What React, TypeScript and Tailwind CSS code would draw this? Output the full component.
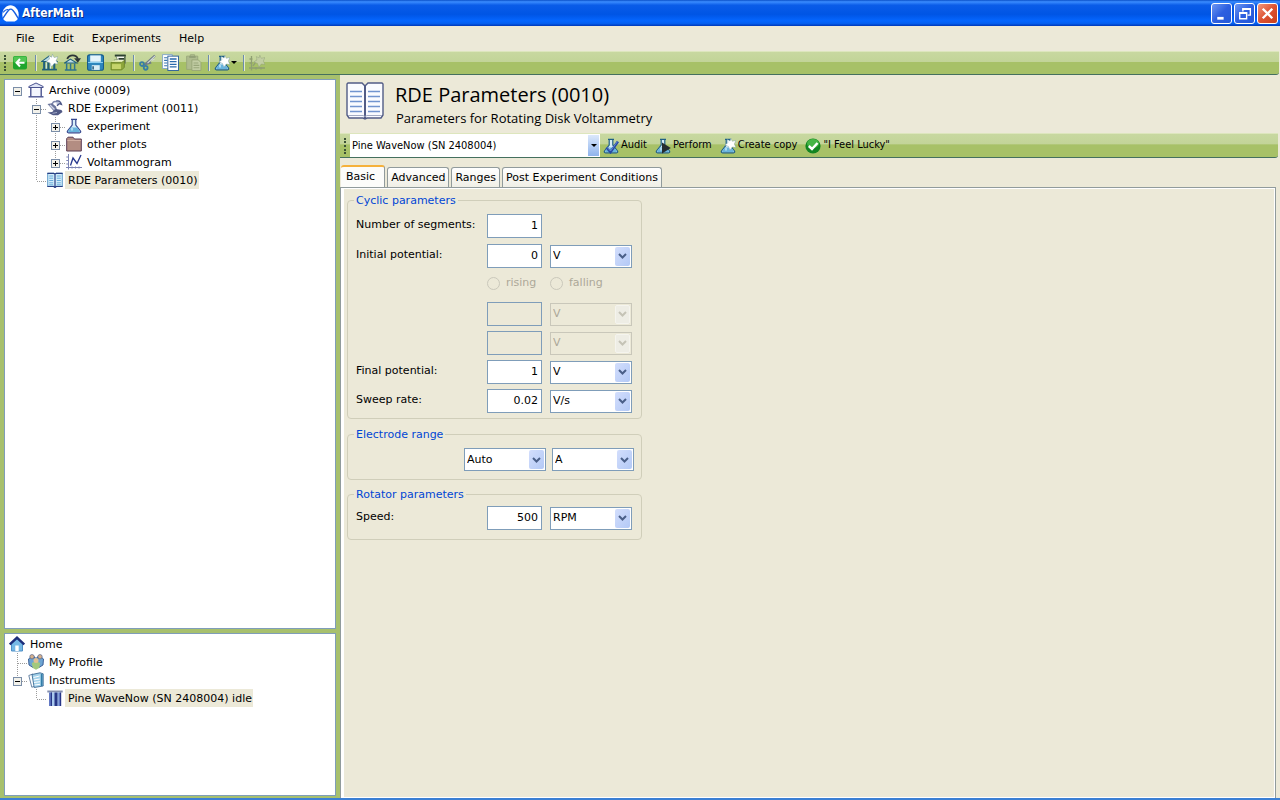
import { ReactNode, useState } from "react";
import clsx from "clsx";

type IconProps = { className?: string }

const ui = "font-['DejaVu_Sans',sans-serif]"
const narrow = "font-['DejaVu_Sans_Condensed','DejaVu_Sans',sans-serif]"
const heading = "font-['Open_Sans','Noto_Sans',sans-serif]"
const bar = "border-t border-t-[#dde6bd] border-b border-b-[#45705e] bg-[linear-gradient(to_bottom,#c8d8a0_0%,#c2d498_45%,#a7c167_46%,#a7c167_100%)]"

const Svg = ({ className = "size-4", children }: { className?: string, children: ReactNode }) => (
    <svg viewBox="0 0 16 16" className={clsx("shrink-0", className)} fill="none" aria-hidden="true">{children}</svg>
)

const LogoIcon = () => (
    <Svg className="size-[17px]">
        <path d="M8 .3C4 .3.4 4 .3 9c0 2 .6 3.700 1.500 5L4 15.500h8l2.200-1.500c.9-1.300 1.500-3 1.500-5C15.600 4 12 .3 8 .3Z" fill="#fff" />
        <path d="M.8 12.500C2.500 10 4 7.500 6.200 5 7.500 3.500 9 3.500 10.200 5c2.200 2.500 3.500 5 5 7.500" stroke="#1a5fe0" strokeWidth="1.300" />
        <path d="M6 4.500C4.500 3.500 3 4.500 1 7" stroke="#1a5fe0" strokeWidth="1" />
    </Svg>
)

const Star = ({ muted = false }: { muted?: boolean }) => (
    <path
        d="M10.800.2 12.300 3.300 16 2.500 14.300 6 16 9.500l-3.700-.5-2.400 3.200-1.400-3.800L4.800 7l3.200-2.200L7.300 1.500l2.800 1.500Z"
        fill={muted ? "#c2cea3" : "#fff"}
        stroke={muted ? "#8c9b74" : "#6f949c"}
        strokeWidth=".4"
    />
)

const BackIcon = () => (
    <Svg>
        <rect x="1" y="1" width="14" height="13.500" rx="2" fill="#1fa52c" />
        <rect x="1.500" y="1.500" width="13" height="6" rx="1.500" fill="#52c653" />
        <path d="M8 4 4.500 7.700 8 11.500M4.800 7.700H12.500" stroke="#fff" strokeWidth="2" />
    </Svg>
)

const HouseBase = () => (
    <>
        <path d="M.8 7 7.500 2 15 7Z" fill="#bcdde6" stroke="#20607c" />
        <path d="M3 7.500V14M7 7.500V14M12.500 7.500V14" stroke="#20607c" strokeWidth="2" />
        <path d="M5 8v6M9 8v6" stroke="#d5eaf0" />
        <path d="M1 14.700h14" stroke="#20607c" strokeWidth="1.600" />
    </>
)

const ArchiveNewIcon = () => <Svg className="size-[17px]"><HouseBase /><Star /></Svg>

const ArchiveOpenIcon = () => (
    <Svg className="size-[17px]">
        <path d="M.5 8.500 6 4.800l6 3.700Z" fill="#bcdde6" stroke="#20607c" />
        <path d="M2.500 9v5.500M6.200 9v5.500M10 9v5.500M.8 15h11" stroke="#2e7390" strokeWidth="1.400" />
        <path d="M3 4.500C5 .2 11.500.2 13 4.500" stroke="#2b3437" strokeWidth="1.700" />
        <path d="M9.500 4H16l-3 4.200Z" fill="#2b3437" />
    </Svg>
)

const SaveIcon = () => (
    <Svg className="size-[17px]">
        <rect x=".5" y=".8" width="15" height="14.500" rx="2" fill="#2e86bd" stroke="#175c8c" />
        <path d="M3 1.300h10v6H3z" fill="#e6f5fc" />
        <path d="M1 8h14" stroke="#8fd0f0" />
        <path d="M4.500 10.500h7.500v4.500H4.500z" fill="#d9edf5" />
        <path d="M5 11.500h1.500v3H5z" fill="#2e5f80" />
    </Svg>
)

const PrintIcon = () => (
    <Svg className="size-[17px]">
        <path d="M5 .8h9.500v8L12 11H4V5.500h3z" fill="#f4f6ee" stroke="#5a7049" strokeWidth=".6" />
        <path d="M4.500 1.500h10.300M8 4.500h5.500" stroke="#2c4030" strokeWidth="1.600" />
        <path d="M13.800 2v7" stroke="#5d7352" strokeWidth="1.300" />
        <path d="M1 8 3 6h10l-2 2z" fill="#dbe7a4" />
        <path d="M1 8h10l2.500-2v6.500L11 15H1z" fill="#8ea63b" stroke="#637c20" strokeWidth=".7" />
        <path d="M1.800 9.500h8.500v4.700H1.800z" fill="#c5d46b" />
    </Svg>
)

const CutIcon = () => (
    <Svg className="size-[17px]">
        <path d="M5 10.500 15 1.500M6.500 9.500l5-1.500" stroke="#6f7c88" strokeWidth="2" />
        <path d="M8 8.500 15 2M12 6l2.500-1" stroke="#d5dcda" strokeWidth="1" />
        <circle cx="2.800" cy="9.500" r="1.800" stroke="#397fa3" strokeWidth="1.700" />
        <circle cx="6.300" cy="13" r="1.800" stroke="#397fa3" strokeWidth="1.700" />
    </Svg>
)

const CopyIcon = () => (
    <Svg className="size-[17px]">
        <rect x=".6" y=".6" width="9" height="13" fill="#fff" stroke="#7fa3c8" strokeWidth=".8" />
        <path d="M2 3.500h3M2 6h3M2 8.500h3M2 11h3" stroke="#3474b1" />
        <rect x="5.500" y="2" width="10" height="13.500" fill="#fff" stroke="#2d619b" strokeWidth=".9" />
        <path d="M7.300 4.700h6.400M7.300 7.200h6.400M7.300 9.700h6.400M7.300 12.200h6.400" stroke="#286aac" strokeWidth="1.200" />
    </Svg>
)

const PasteIcon = () => (
    <Svg className="size-[17px]">
        <path d="M1.500 2H5V.7h4V2h3v12.500H1.500z" fill="#aebb8e" stroke="#98a67a" strokeWidth=".8" />
        <path d="M4 2.800h6" stroke="#8b9970" strokeWidth="1.400" />
        <path d="M6.500 5.500h6l2.500 2.500v7.500H6.500z" fill="#c2cda4" stroke="#94a375" strokeWidth=".8" />
        <path d="M8 8.500h4.500M8 10.700h5.500M8 12.900h5.500" stroke="#98a67a" />
    </Svg>
)

const FlaskShape = ({ dark = false }: { dark?: boolean }) => (
    <>
        <path d="M5 1.300h6M6.200 2v5L1.500 13c-.6 1 0 1.800 1 1.800h11c1 0 1.600-.8 1-1.800L9.800 7V2" fill="#d7eef8" stroke={dark ? "#1f5f86" : "#34478f"} strokeWidth="1.200" />
        <path d="M4.700 9.500h6.600l2.500 3.800c.2.500 0 .8-.5.800H2.700c-.5 0-.7-.3-.5-.8z" fill="#68b4dd" />
        <path d="M6 10v2.500" stroke="#d9f3ff" strokeWidth="1.200" />
    </>
)

const FlaskIcon = ({ className }: IconProps) => <Svg className={className}><FlaskShape /></Svg>
const FlaskStarIcon = () => <Svg><FlaskShape dark /><Star /></Svg>
const FlaskPlayIcon = () => <Svg><FlaskShape dark /><path d="M7 4.500 15.800 10 7 15.500Z" fill="#242c30" /></Svg>

const FlaskCheckIcon = () => (
    <Svg>
        <FlaskShape dark />
        <path d="M3.500 9.500 7.500 14 15 3.500" stroke="#2549a5" strokeWidth="2.600" />
        <path d="M4 9.300 7.500 13 14.500 3.500" stroke="#7ea4e2" strokeWidth=".7" />
    </Svg>
)

const PlotMutedIcon = () => (
    <Svg>
        <path d="M2.500 1v14.500M0 13h16M.5 4h3M.5 8h3M7 12v2.500M12 12v2.500M4 11l4-6" stroke="#8f9f72" strokeWidth="1.300" />
        <Star muted />
    </Svg>
)

const OkIcon = () => (
    <Svg>
        <circle cx="8" cy="8" r="7.600" fill="#128521" />
        <ellipse cx="8" cy="5.500" rx="6" ry="4.500" fill="#45b545" />
        <path d="M3.800 8 7 11 12.500 5" stroke="#fff" strokeWidth="2.400" />
    </Svg>
)

const TempleIcon = () => (
    <Svg>
        <path d="M.8 5.500V4.500L8 1l7.200 3.500v1Z" fill="#dfe4f5" stroke="#4a5390" />
        <path d="M2.800 6v8.500M13.200 6v8.500" stroke="#4a5390" strokeWidth="1.400" />
        <path d="M4 6.500h8v7.500H4z" fill="#f3f5fc" />
        <path d="M.5 14.800h15" stroke="#4a5390" strokeWidth="1.400" />
    </Svg>
)

const MotorIcon = () => (
    <Svg>
        <path d="M5 6C5 2 7 1 9.500 1.800" stroke="#7a84aa" strokeWidth="1.400" />
        <path d="M9 1.200C11 .2 13.500 1 14.500 4.500l-2.200-.8-2.300 2" stroke="#4b5687" strokeWidth="1.300" fill="#b9c1d8" />
        <path d="M.5 4 5 3.200l4 3.300 1.500 5-2 2L5 9z" fill="#6c769c" />
        <path d="m3 5 4.500 4.500" stroke="#d0d6e8" strokeWidth="1.400" />
        <path d="M.5 12.500 5 12l4-3 5.500 1 1 2-4.500 3.300H6z" fill="#515a85" />
        <path d="m5.500 13.300 4.500-.8" stroke="#a2abc9" />
    </Svg>
)

const FolderIcon = () => (
    <Svg>
        <path d="M.7 2.500 2 1.200h5L8.500 3h6.800v12H.7z" fill="#b38d82" stroke="#5a3c54" />
        <path d="M1.300 4.500h13.500" stroke="#d1aea1" />
    </Svg>
)

const ChartIcon = () => (
    <Svg>
        <path d="M2.500 0v15.500M0 13.500h16M.3 3H3M.3 6.500H3M.3 10H3M6 12.500v2M9.500 12.500v2M13 12.500v2" stroke="#7c84b4" />
        <path d="M4.500 11.500 7 4l4 5.500L15 1" stroke="#26378e" strokeWidth="1.300" />
    </Svg>
)

const BookIcon = ({ className }: IconProps) => (
    <Svg className={className}>
        <path d="M.7 1.300h6L8 2.300l1.300-1h6v13H9.300l-1.300 1-1.300-1H.7z" fill="#d3edfa" stroke="#5d9ac8" />
        <path d="M.3 1.300h6.400L8 2.300l1.300-1h6.400M.3 14.500h6.400l1.300 1 1.300-1h6.400M8 2v13" stroke="#283f84" strokeWidth="1.200" />
        <path d="M2.200 4h4M2.200 6.200h4M2.200 8.500h4M2.200 10.800h4M2.200 12.800h4M9.800 4h4M9.800 6.200h4M9.800 8.500h4M9.800 10.800h4M9.800 12.800h4" stroke="#6aaddb" />
    </Svg>
)

const LargeBookIcon = () => (
    <svg viewBox="0 0 38 38" className="size-[38px] shrink-0" fill="none" aria-hidden="true">
        <path d="M2 1h14l3 3 3-3h14l1 1v31l-2 3H21l-2 1-2-1H3l-2-3V2z" fill="#fafbff" stroke="#525c86" strokeWidth="1.400" />
        <path d="M19 4v33" stroke="#525c86" strokeWidth="2" />
        <path d="M2 33.500h15l2 1 2-1h15" stroke="#a4abc3" strokeWidth="1" />
        <path d="M4 9.500h12M4 14.500h12M4 19.500h12M4 24.500h12M4 29.500h12M22 9.500h12M22 14.500h12M22 19.500h12M22 24.500h12M22 29.500h12" stroke="#7294cf" strokeWidth="1.700" />
    </svg>
)

const HomeIcon = () => (
    <Svg>
        <path d="M2.500 7.500 8 3l5.500 4.500v7.500h-11z" fill="#76b9e6" stroke="#4f8fc6" />
        <path d="M.8 8.500 8 1.700l7.200 6.800" stroke="#1c2d7b" strokeWidth="2.400" />
        <path d="M6.300 9.500h3.400V15H6.300z" fill="#fff" />
    </Svg>
)

const PeopleIcon = () => (
    <Svg>
        <path d="M.5 5 3 3h4l1 8-3 2.500L1 11zM15.500 5 13 3H9l-1 8 3 2.500 4-2.500z" fill="#6da4d3" stroke="#31558f" strokeWidth=".9" />
        <circle cx="4" cy="2.700" r="2.200" fill="#d7b18b" stroke="#435787" strokeWidth=".6" />
        <circle cx="12" cy="2.700" r="2.200" fill="#d7b18b" stroke="#435787" strokeWidth=".6" />
        <path d="M3.800 9 6 8h4l2.200 1-1 5L8 15.700 4.800 14z" fill="#a2c97d" />
        <circle cx="8" cy="6.500" r="2.500" fill="#e0bf92" />
    </Svg>
)

const SheetsIcon = () => (
    <Svg>
        <path d="m.8 3.500 4-1.500 3 12-4 1.200z" fill="#fff" stroke="#58789c" strokeWidth=".9" />
        <path d="M4 2.500 12 .8l3.200 1V14l-9 1.500z" fill="#a4d2ea" stroke="#3f6d96" strokeWidth=".9" />
        <path d="m5.500 5.500 6-1.500M5.800 8l6-1M6 10.500l6-.8M6.500 13l5.500-.7" stroke="#fff" />
        <path d="M13.700 2v12" stroke="#337da8" strokeWidth="1.700" />
    </Svg>
)

const PotentiostatIcon = () => (
    <Svg>
        <path d="M.3.500h15.400v2H.3z" fill="#848fae" />
        <path d="M2 2.500h12V16H2z" fill="#a9c9ee" />
        <path d="M2 2.500h3V16H2zM11.500 2.500h1.700V16h-1.700z" fill="#6379c4" />
        <path d="M3.800 2.500h1.200V16H3.800zM7.500 2.500h3V16h-3zM13 2.500h1.200V16H13z" fill="#273686" />
    </Svg>
)

const Grip = () => (
    <span className="flex w-[10px] shrink-0 justify-center" aria-hidden="true">
        <span className="h-4 w-0 border-l-2 border-dotted border-[#3b5136]" />
    </span>
)

const Separator = () => (
    <span className="flex w-[6px] shrink-0 justify-center" aria-hidden="true">
        <span className="h-4 w-[2px] border-l border-l-[#6d8cae] bg-[#e3ecc9]" />
    </span>
)

const Caret = () => <span className="border-x-[3px] border-t-[3px] border-x-transparent border-t-black" />

const ToolButton = ({ label, disabled, children }: { label: string, disabled?: boolean, children: ReactNode }) => (
    <button aria-label={label} disabled={disabled} className="flex h-5 min-w-[23px] shrink-0 items-center pb-px pl-[2px]">
        {children}
    </button>
)

const ActionButton = ({ label, children }: { label: string, children: ReactNode }) => (
    <button className={clsx("flex shrink-0 items-center gap-[2px] whitespace-nowrap", narrow)}>
        {children}
        {label}
    </button>
)

// Each tree row starts with 19px wide cells that hold the connector lines
type Cell = "blank" | "line" | "tee" | "elbow" | "plus" | "minus" | "plusEnd" | "minusRoot" | "minusEnd"

const TreeCell = ({ kind }: { kind: Cell }) => {
    const toggle = kind.startsWith("plus") || kind.startsWith("minus")
    const up = kind != "blank" && kind != "minusRoot"
    const down = kind == "line" || kind == "tee" || kind == "plus" || kind == "minus"
    const across = up && kind != "line"
    const art = (
        <svg viewBox="0 0 19 18" className="h-[18px] w-[19px] shrink-0" fill="none" shapeRendering="crispEdges" aria-hidden="true">
            {up && <path d="M9.500 0v9" stroke="#9b9b9b" strokeDasharray="1 1" />}
            {down && <path d="M9.500 10v8" stroke="#9b9b9b" strokeDasharray="1 1" />}
            {across && <path d="M10 10.500h9" stroke="#9b9b9b" strokeDasharray="1 1" />}
            {toggle && (
                <>
                    <rect x="5.500" y="6.500" width="8" height="8" fill="#f2f1ea" stroke="#7b8ea8" />
                    <path d="M7 10.500h5" stroke="#000" />
                    {kind.startsWith("plus") && <path d="M9.500 8v5" stroke="#000" />}
                </>
            )}
        </svg>
    )
    if (!toggle) return art
    return <button aria-label={kind.startsWith("plus") ? "Expand" : "Collapse"} className="shrink-0">{art}</button>
}

type Node = { label: string, cells: Cell[], icon: ReactNode, selected?: boolean }

const archive: Node[] = [
    { label: "Archive (0009)", cells: ["minusRoot"], icon: <TempleIcon /> },
    { label: "RDE Experiment (0011)", cells: ["blank", "minus"], icon: <MotorIcon /> },
    { label: "experiment", cells: ["blank", "line", "plus"], icon: <FlaskIcon /> },
    { label: "other plots", cells: ["blank", "line", "plus"], icon: <FolderIcon /> },
    { label: "Voltammogram", cells: ["blank", "line", "plusEnd"], icon: <ChartIcon /> },
    { label: "RDE Parameters (0010)", cells: ["blank", "elbow"], icon: <BookIcon />, selected: true },
]

const home: Node[] = [
    { label: "Home", cells: [], icon: <HomeIcon /> },
    { label: "My Profile", cells: ["tee"], icon: <PeopleIcon /> },
    { label: "Instruments", cells: ["minusEnd"], icon: <SheetsIcon /> },
    { label: "Pine WaveNow (SN 2408004) idle", cells: ["blank", "elbow"], icon: <PotentiostatIcon />, selected: true },
]

const Tree = ({ nodes, name }: { nodes: Node[], name: string }) => (
    <ul className="px-[3px] py-px" aria-label={name}>
        {nodes.map((node) => (
            <li key={node.label} className="flex h-[18px] items-center">
                {node.cells.map((kind, i) => <TreeCell key={i} kind={kind} />)}
                <span className="flex w-[19px] shrink-0 pl-px">{node.icon}</span>
                <span className={clsx("h-[18px] pt-px pr-px pl-[3px] leading-[17px] whitespace-nowrap", node.selected && "bg-[#ece9d8]")}>{node.label}</span>
            </li>
        ))}
    </ul>
)

type ComboProps = { label: string, options: string[], disabled?: boolean }

const Combo = ({ label, options, disabled }: ComboProps) => (
    <span className="relative inline-flex h-[23px] w-[82px] shrink-0">
        <select
            aria-label={label}
            disabled={disabled}
            className={clsx(
                "h-full w-full appearance-none border pt-px pr-5 pl-[2px] opacity-100 outline-none",
                disabled ? "border-[#c9c7ba] bg-[#ece9d8] text-[#aca899]" : "border-[#7f9db9] bg-white text-black"
            )}
        >
            {options.map((option) => <option key={option}>{option}</option>)}
        </select>
        <span
            className={clsx(
                "pointer-events-none absolute inset-y-[2px] right-[2px] flex w-[15px] items-center justify-center rounded-[2px]",
                disabled ? "border border-[#f5f4ee] bg-[#eeede5] text-[#c5c3b6]" : "bg-linear-to-br from-[#d3defc] to-[#b3c9f6] text-[#4a5f88]"
            )}
        >
            <svg viewBox="0 0 9 6" className="h-[6px] w-[9px]" fill="none" aria-hidden="true">
                <path d="m1 1 3.500 3.500L8 1" stroke="currentColor" strokeWidth="2" />
            </svg>
        </span>
    </span>
)

const NumberBox = ({ id, label, value, disabled }: { id: string, label?: string, value: string, disabled?: boolean }) => (
    <input
        id={id}
        aria-label={label}
        defaultValue={value}
        disabled={disabled}
        className={clsx("h-6 w-[55px] shrink-0 border border-[#7f9db9] pr-[3px] pb-[2px] text-right outline-none", disabled ? "bg-[#ece9d8]" : "bg-white")}
    />
)

const Group = ({ title, className, children }: { title: string, className?: string, children: ReactNode }) => (
    <fieldset className={clsx("w-[295px] rounded-[4px] border border-[#d0ceba]", className)}>
        <legend className="ml-[6px] h-4 px-[2px] leading-[17px] text-[#0046d5]">{title}</legend>
        {children}
    </fieldset>
)

const Row = ({ id, label, className, children }: { id?: string, label?: string, className?: string, children: ReactNode }) => (
    <div className={clsx("flex h-[29px] items-start pl-2", className)}>
        <div className="w-[131px] shrink-0 leading-[22px]">
            {label && <label htmlFor={id}>{label}</label>}
        </div>
        <div className="flex items-center gap-2">{children}</div>
    </div>
)

const Direction = ({ label }: { label: string }) => (
    <label className="flex h-5 w-[55px] items-center gap-[6px] text-[#aca899]">
        <input type="radio" name="direction" disabled className="size-[13px] shrink-0 appearance-none rounded-full border border-[#cac8bb]" />
        {label}
    </label>
)

const BasicTab = () => (
    <>
        <Group title="Cyclic parameters" className="pt-[6px]">
            <Row id="segments" label="Number of segments:" className="mb-px"><NumberBox id="segments" value="1" /></Row>
            <Row id="initial" label="Initial potential:">
                <NumberBox id="initial" value="0" />
                <Combo label="Initial potential unit" options={["V", "mV"]} />
            </Row>
            <Row>
                <Direction label="rising" />
                <Direction label="falling" />
            </Row>
            <Row>
                <NumberBox id="upper" label="Upper potential" value="" disabled />
                <Combo label="Upper potential unit" options={["V"]} disabled />
            </Row>
            <Row>
                <NumberBox id="lower" label="Lower potential" value="" disabled />
                <Combo label="Lower potential unit" options={["V"]} disabled />
            </Row>
            <Row id="final" label="Final potential:">
                <NumberBox id="final" value="1" />
                <Combo label="Final potential unit" options={["V", "mV"]} />
            </Row>
            <Row id="sweep" label="Sweep rate:">
                <NumberBox id="sweep" value="0.02" />
                <Combo label="Sweep rate unit" options={["V/s", "mV/s"]} />
            </Row>
        </Group>
        <Group title="Electrode range" className="mt-[7px] pt-[6px] pb-2">
            <div className="flex justify-end gap-[6px] pr-[7px]">
                <Combo label="Electrode range" options={["Auto"]} />
                <Combo label="Electrode range unit" options={["A", "mA"]} />
            </div>
        </Group>
        <Group title="Rotator parameters" className="mt-[6px] pt-1 pb-1">
            <Row id="speed" label="Speed:">
                <NumberBox id="speed" value="500" />
                <Combo label="Speed unit" options={["RPM"]} />
            </Row>
        </Group>
    </>
)

const tabs = ["Basic", "Advanced", "Ranges", "Post Experiment Conditions"]

export default function App() {
    const [tab, setTab] = useState("Basic")

    return (
        <div className={clsx("flex h-screen flex-col overflow-hidden border-b-2 border-[#3b7fd4] bg-[#ece9d8] text-[11px] text-black", ui)}>
            <header className="flex h-[26px] shrink-0 items-center bg-[linear-gradient(to_bottom,#0a50c8_0%,#3a8cff_7%,#0a5ce8_20%,#0055e5_55%,#0566ff_80%,#0560f0_90%,#0038b8_100%)] pr-[2px] pl-[2px]">
                <LogoIcon />
                <h1 className={clsx("ml-[3px] text-xs font-bold text-white [text-shadow:1px_1px_0_#0a2a80]", narrow)}>AfterMath</h1>
                <div className="ml-auto flex gap-[2px]">
                    <button aria-label="Minimize" className="flex size-[21px] items-center justify-center rounded-[3px] border border-white bg-linear-to-br from-[#6d96f2] via-[#2d5fe0] to-[#2358d8]">
                        <Svg className="size-[17px]"><path d="M4 12.500h6" stroke="#fff" strokeWidth="2.600" /></Svg>
                    </button>
                    <button aria-label="Restore" className="flex size-[21px] items-center justify-center rounded-[3px] border border-white bg-linear-to-br from-[#6d96f2] via-[#2d5fe0] to-[#2358d8]">
                        <Svg className="size-[17px]"><path d="M6.500 6V3.500h7v6H11M3.500 7.500h6.500v5.500H3.500z" stroke="#fff" strokeWidth="1.300" /><path d="M6 3.800h8M3 7.500h7.500" stroke="#fff" strokeWidth="1.800" /></Svg>
                    </button>
                    <button aria-label="Close" className="flex size-[21px] items-center justify-center rounded-[3px] border border-white bg-linear-to-br from-[#f0957b] via-[#dd5231] to-[#c8401c]">
                        <Svg className="size-[17px]"><path d="m3.500 3.500 9 9m0-9-9 9" stroke="#fff" strokeWidth="2.200" /></Svg>
                    </button>
                </div>
            </header>

            <nav className="flex h-[25px] shrink-0 items-center gap-[18px] pt-px pl-4" aria-label="Menu">
                {["File", "Edit", "Experiments", "Help"].map((item) => <button key={item}>{item}</button>)}
            </nav>

            <div className={clsx("mr-px flex h-6 shrink-0 items-center rounded-br-[3px]", bar)}>
                <Grip />
                <ToolButton label="Back"><BackIcon /></ToolButton>
                <Separator />
                <ToolButton label="New archive"><ArchiveNewIcon /></ToolButton>
                <ToolButton label="Open archive"><ArchiveOpenIcon /></ToolButton>
                <ToolButton label="Save"><SaveIcon /></ToolButton>
                <ToolButton label="Print"><PrintIcon /></ToolButton>
                <Separator />
                <ToolButton label="Cut"><CutIcon /></ToolButton>
                <ToolButton label="Copy"><CopyIcon /></ToolButton>
                <ToolButton label="Paste" disabled><PasteIcon /></ToolButton>
                <Separator />
                <ToolButton label="New experiment">
                    <span className="flex w-[27px] items-center gap-px"><FlaskStarIcon /><Caret /></span>
                </ToolButton>
                <Separator />
                <ToolButton label="New plot" disabled><PlotMutedIcon /></ToolButton>
            </div>

            <div className="flex min-h-0 flex-1">
                <aside className="flex w-[340px] shrink-0 flex-col gap-1 bg-[#a7c06d] pt-1 pr-1 pb-[2px] pl-1">
                    <div className="min-h-0 flex-1 overflow-hidden border border-[#7f9db9] bg-white"><Tree nodes={archive} name="Archive" /></div>
                    <div className="h-[163px] shrink-0 overflow-hidden border border-[#7f9db9] bg-white"><Tree nodes={home} name="Home" /></div>
                </aside>

                <main className="flex min-w-0 flex-1 flex-col">
                    <div className="flex h-[58px] shrink-0 items-start gap-[11px] pt-[7px] pl-[6px]">
                        <LargeBookIcon />
                        <div className={heading}>
                            <h2 className="text-[20px] leading-[26px]">RDE Parameters (0010)</h2>
                            <p className="pl-px text-[13px] leading-[21px]">Parameters for Rotating Disk Voltammetry</p>
                        </div>
                    </div>

                    <div className={clsx("mr-[2px] flex h-[25px] shrink-0 items-center rounded-br-[3px]", bar)}>
                        <Grip />
                        <span className="relative mr-[3px] flex h-[23px] w-[250px] shrink-0">
                            <select aria-label="Instrument" className={clsx("h-full w-full appearance-none bg-white pt-px pr-4 pl-[2px] outline-none", narrow)}>
                                <option>Pine WaveNow (SN 2408004)</option>
                            </select>
                            <span className="pointer-events-none absolute inset-y-px right-px flex w-[11px] items-center justify-center bg-linear-to-b from-[#dce8fb] to-[#8fb4ec]"><Caret /></span>
                        </span>
                        <div className="flex gap-2">
                            <ActionButton label="Audit"><FlaskCheckIcon /></ActionButton>
                            <ActionButton label="Perform"><FlaskPlayIcon /></ActionButton>
                            <ActionButton label="Create copy"><FlaskStarIcon /></ActionButton>
                            <ActionButton label={'"I Feel Lucky"'}><OkIcon /></ActionButton>
                        </div>
                    </div>

                    <div className="flex h-[29px] shrink-0 items-end gap-[2px] pl-px" role="tablist">
                        {tabs.map((name) => (
                            <button
                                key={name}
                                role="tab"
                                aria-selected={tab == name}
                                onClick={() => setTab(name)}
                                className={clsx(
                                    "rounded-t-[3px] border-[#919b9c]",
                                    tab == name
                                        ? "h-[22px] border-t-2 border-r border-t-[#f5b13c] bg-[#fcfcfa] pr-[9px] pl-[5px]"
                                        : "h-5 border-x border-t bg-linear-to-b from-white to-[#f0efe6] px-[3px] pt-px"
                                )}
                            >
                                {name}
                            </button>
                        ))}
                    </div>

                    <div className="mr-1 min-h-0 flex-1 border border-b-0 border-[#919b9c]" role="tabpanel" aria-label={tab}>
                        <div className="h-full border border-l-[3px] border-white pt-[3px] pl-[3px]">
                            {tab == "Basic" && <BasicTab />}
                        </div>
                    </div>
                </main>
            </div>
        </div>
    )
}
